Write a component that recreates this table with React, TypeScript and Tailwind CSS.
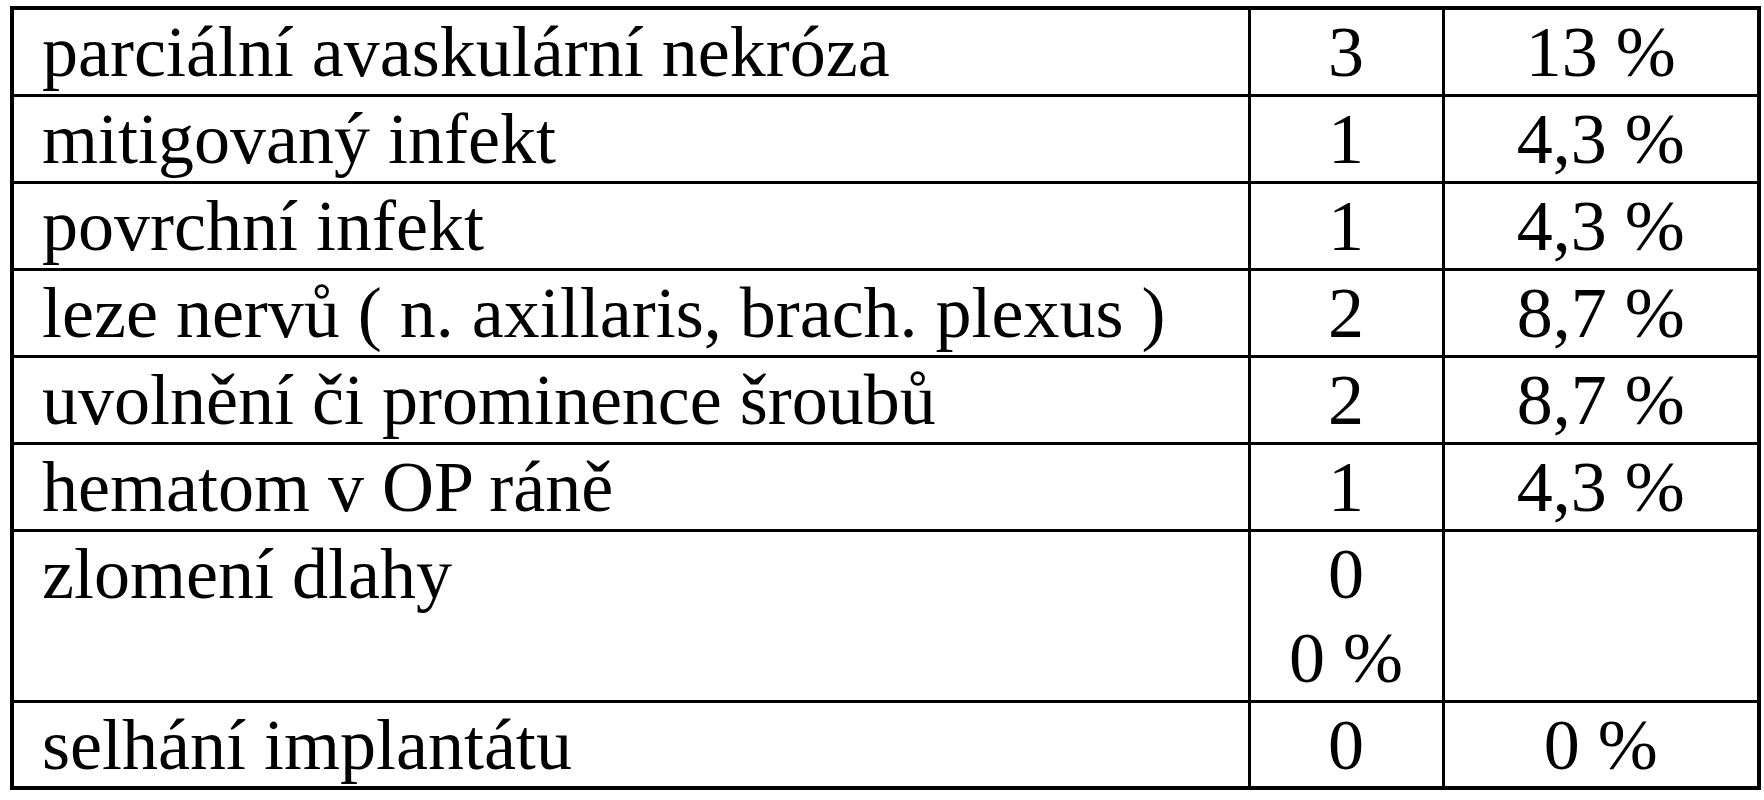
import React from "react";

type Row = {
  label: string;
  count: string;
  percent?: string;
  extra?: string;
};

const rows: Row[] = [
  { label: "parciální avaskulární nekróza", count: "3", percent: "13 %" },
  { label: "mitigovaný infekt", count: "1", percent: "4,3 %" },
  { label: "povrchní infekt", count: "1", percent: "4,3 %" },
  { label: "leze nervů ( n. axillaris, brach. plexus )", count: "2", percent: "8,7 %" },
  { label: "uvolnění či prominence šroubů", count: "2", percent: "8,7 %" },
  { label: "hematom v OP ráně", count: "1", percent: "4,3 %" },
  { label: "zlomení dlahy", count: "0", extra: "0 %" },
  { label: "selhání implantátu", count: "0", percent: "0 %" },
];

export default function App() {
  return (
    <div className="w-[1764px] h-[800px] bg-white overflow-hidden pt-[6px] pl-[10px]">
      <table className="border-collapse border-[4px] border-black table-fixed w-[1747px] font-['Liberation_Serif',serif] text-[72px] leading-[80px] text-black">
        <colgroup>
          <col className="w-[1237px]" />
          <col className="w-[194px]" />
          <col className="w-[316px]" />
        </colgroup>
        <tbody>
          {rows.map((row) => (
            <tr key={row.label}>
              <td
                className={`border-[3px] border-black align-top pl-[28px] pt-[2px] whitespace-nowrap ${
                  row.extra ? "h-[170px]" : "h-[87px]"
                }`}
              >
                {row.label}
              </td>
              <td
                className={`border-[3px] border-black align-top text-center whitespace-nowrap ${
                  row.extra ? "leading-[84px] pt-0" : "pt-[2px]"
                }`}
              >
                {row.count}
                {row.extra && (
                  <>
                    <br />
                    {row.extra}
                  </>
                )}
              </td>
              <td className="border-[3px] border-black align-top text-center pt-[2px] whitespace-nowrap">
                {row.percent}
              </td>
            </tr>
          ))}
        </tbody>
      </table>
    </div>
  );
}
